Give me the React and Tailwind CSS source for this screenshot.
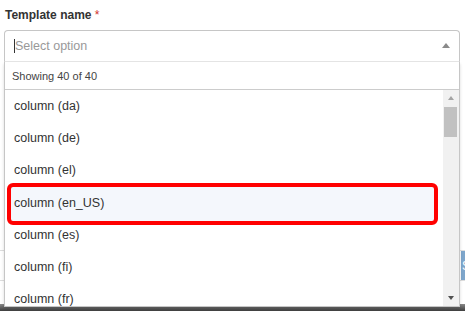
export default function App() {
  const items = ['da', 'de', 'el', 'en_US', 'es', 'fi', 'fr'];
  return (
    <div className="relative w-[465px] h-[311px] overflow-hidden bg-white font-['Liberation_Sans',Arial,sans-serif] text-[#333]">
      <div className="flex flex-col h-full">
        <div className="h-[250px] px-[4px] pt-[8px]">
          <div className="text-[12px] leading-[14px] font-bold pl-[1px] text-[#333]">
            Template name <span className="text-[#d0312d] font-normal text-[12px]">*</span>
          </div>
          <div className="relative mt-[8px] w-[456px]">
            <div className="h-[32px] border border-[#c6c6c6] border-b-[#e6e6e6] rounded-t-[4px] flex items-center pl-[9px] pr-[9px] bg-white">
              <span className="w-[1px] h-[14px] bg-[#333]" />
              <span className="text-[12.5px] leading-[16px] text-[#999]">Select option</span>
              <span className="ml-auto mb-[2px] w-0 h-0 border-x-[4.5px] border-x-transparent border-b-[5px] border-b-[#8a8a8a]" />
            </div>
            <div className="absolute top-full left-0 right-0 z-10 bg-white border-x border-b border-[#c6c6c6] shadow-[0_2px_3px_rgba(0,0,0,0.15)]">
              <div className="h-[28px] border-b border-[#cccccc] pl-[7px] pt-[8px] text-[11px] leading-[13px] text-[#444]">
                Showing 40 of 40
              </div>
              <div className="h-[216px] flex">
                <div className="flex-1 overflow-hidden">
                  {items.map((it) => (
                    <div key={it} className="relative h-[32.2px] flex items-center pl-[9px] text-[12.5px] leading-[16px] text-[#333]">
                      {it === 'en_US' && (
                        <span className="absolute left-[2px] right-[5px] top-[-4px] bottom-[-6px] border-[4px] border-[#ff0000] rounded-[6px] bg-[#f4f7fc]" />
                      )}
                      <span className="relative">column ({it})</span>
                    </div>
                  ))}
                </div>
                <div className="w-[16px] bg-[#f1f1f1] flex flex-col">
                  <div className="h-[16px] flex items-center justify-center">
                    <span className="w-0 h-0 border-x-[3.5px] border-x-transparent border-b-[4px] border-b-[#a3a3a3]" />
                  </div>
                  <div className="mt-[1px] ml-[1px] w-[13px] h-[30px] bg-[#c1c1c1]" />
                  <div className="mt-auto h-[16px] flex items-center justify-center">
                    <span className="w-0 h-0 border-x-[3.5px] border-x-transparent border-t-[4px] border-t-[#505050]" />
                  </div>
                </div>
              </div>
            </div>
          </div>
        </div>
        <div className="h-[31px] border-y border-[#dddddd] flex justify-end">
          <button className="w-[60px] h-full mr-[-56px] bg-[#7ea6cb] text-white text-[12px] text-left pl-[1px]">Save</button>
        </div>
        <div className="flex-1" />
        <div className="h-[7px] bg-linear-to-b from-[#8a8a8a] to-[#3f3f3f]" />
      </div>
    </div>
  );
}
